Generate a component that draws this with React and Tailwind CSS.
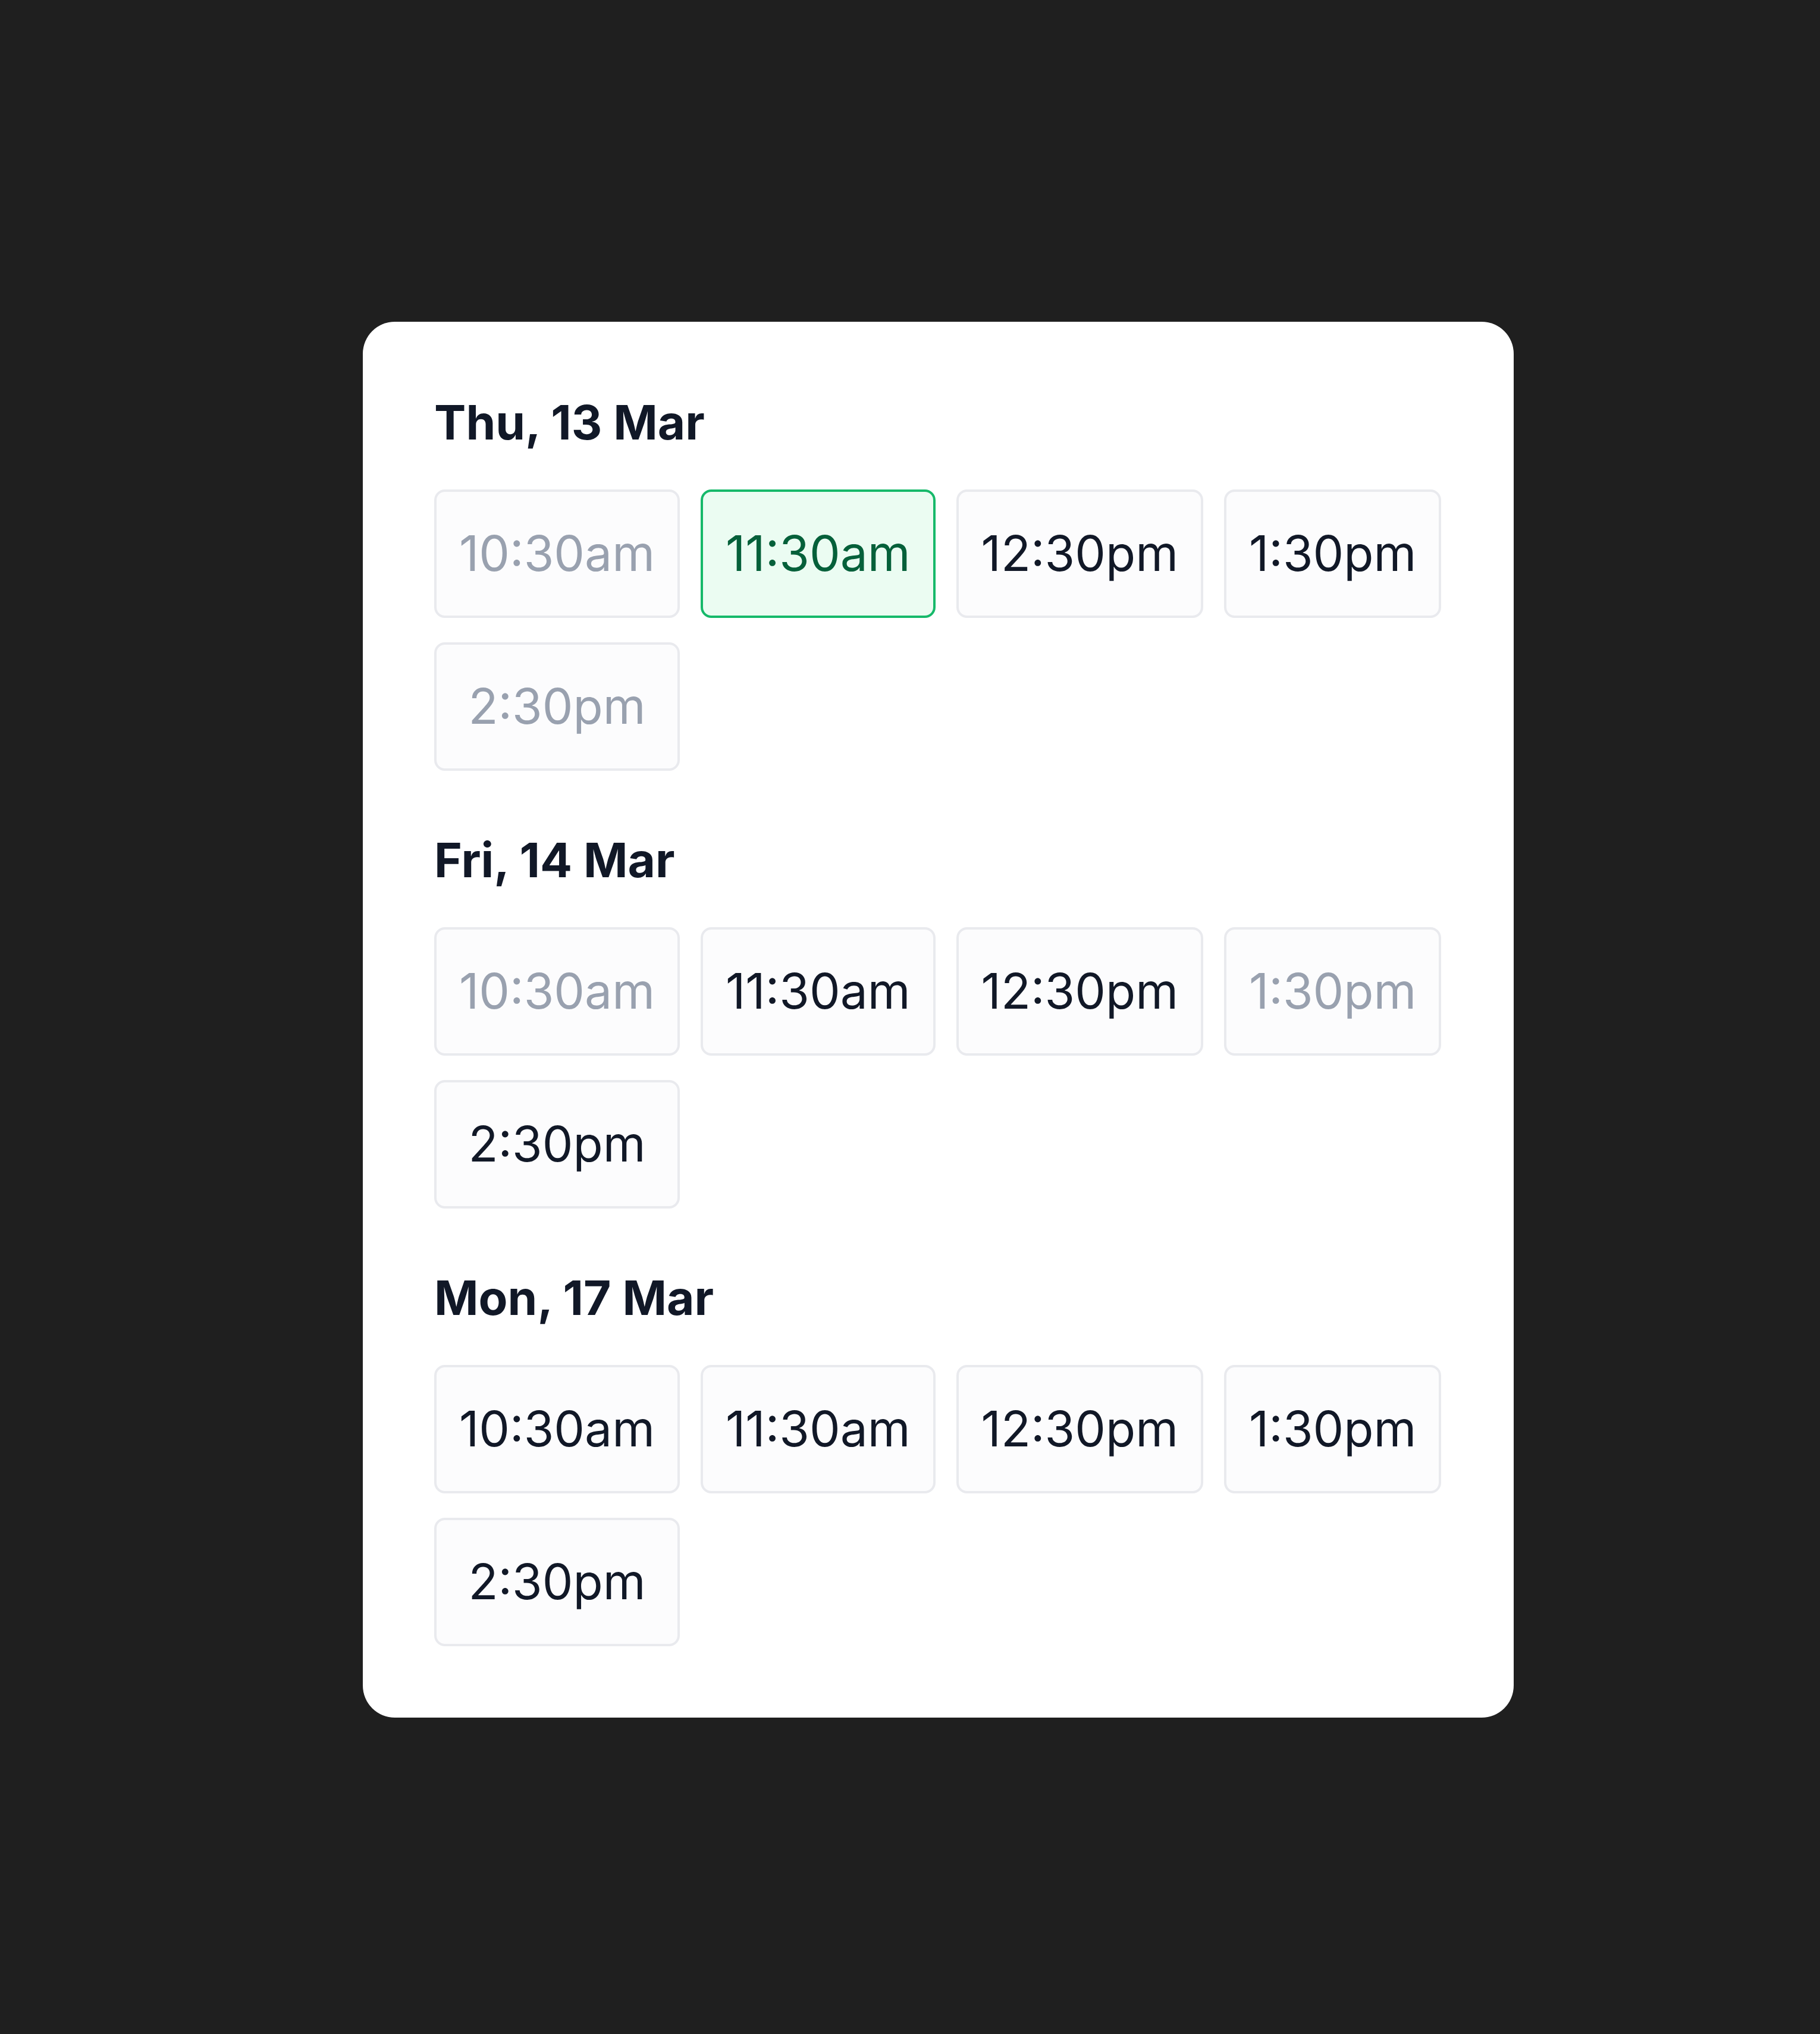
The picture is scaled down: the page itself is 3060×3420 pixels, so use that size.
import React from "react";

const days = [
  {
    label: "Thu, 13 Mar",
    slots: [
      { time: "10:30am", state: "off" },
      { time: "11:30am", state: "selected" },
      { time: "12:30pm", state: "open" },
      { time: "1:30pm", state: "open" },
      { time: "2:30pm", state: "off" },
    ],
  },
  {
    label: "Fri, 14 Mar",
    slots: [
      { time: "10:30am", state: "off" },
      { time: "11:30am", state: "open" },
      { time: "12:30pm", state: "open" },
      { time: "1:30pm", state: "off" },
      { time: "2:30pm", state: "open" },
    ],
  },
  {
    label: "Mon, 17 Mar",
    slots: [
      { time: "10:30am", state: "open" },
      { time: "11:30am", state: "open" },
      { time: "12:30pm", state: "open" },
      { time: "1:30pm", state: "open" },
      { time: "2:30pm", state: "open" },
    ],
  },
];

const slotClass = {
  off: "border-[#e9eaee] bg-[#fcfcfd] text-[#99a1af]",
  open: "border-[#e9eaee] bg-[#fcfcfd] text-[#111827]",
  selected: "border-[#16b96a] bg-[#ebfcf2] text-[#05603a]",
};

const Slot = ({ time, state }) => (
  <button
    type="button"
    disabled={state === "off"}
    className={`rounded-[18px] border-4 px-[38px] py-[55px] text-center text-[82px] leading-[98px] font-normal ${slotClass[state]}`}
  >
    {time}
  </button>
);

const Day = ({ label, slots }) => (
  <section className="flex flex-col">
    <h2 className="mb-[64px] text-[80px] leading-[98px] font-bold text-[#111827]">{label}</h2>
    <div className="grid grid-cols-[repeat(4,auto)] justify-start gap-x-[35px] gap-y-[41px]">
      {slots.map((s) => (
        <Slot key={s.time} {...s} />
      ))}
    </div>
  </section>
);

export default function App() {
  return (
    <div
      className="min-h-[3420px] w-[3060px] bg-[#1f1f1f] pl-[610px] pt-[541px]"
      style={{ fontFamily: "Inter, 'Noto Sans', sans-serif" }}
    >
      <div className="flex w-[1935px] flex-col gap-[101px] rounded-[54px] bg-white p-[120px]">
        {days.map((d) => (
          <Day key={d.label} {...d} />
        ))}
      </div>
    </div>
  );
}
